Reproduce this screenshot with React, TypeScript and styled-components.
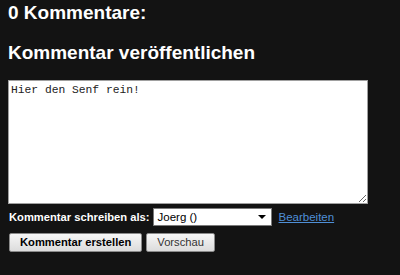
import styled, { createGlobalStyle } from 'styled-components';

const GlobalStyle = createGlobalStyle`
  html, body {
    margin: 0;
    padding: 0;
    background: #131313;
  }
  body {
    font-family: 'Liberation Sans', Arial, sans-serif;
    color: #ffffff;
  }
`;

const Page = styled.div`
  width: 400px;
  height: 275px;
  padding: 3px 8px 0;
  box-sizing: border-box;
  background: #131313;
`;

const Heading = styled.h2`
  margin: 0;
  font-size: 19px;
  line-height: 20px;
  font-weight: bold;
  color: #ffffff;
`;

const SubHeading = styled(Heading)`
  margin-top: 20px;
`;

const CommentBox = styled.textarea`
  display: block;
  margin-top: 17px;
  width: 360px;
  height: 124px;
  box-sizing: border-box;
  padding: 3px 2px;
  border: 1px solid #a0a0a0;
  background: #ffffff;
  color: #222;
  font-family: 'Liberation Mono', 'Courier New', monospace;
  font-size: 11.3px;
  line-height: 13px;
  resize: both;
  outline: none;
`;

const IdentityRow = styled.div`
  display: flex;
  align-items: center;
  margin-top: 4px;
  height: 18px;
`;

const Label = styled.span`
  font-size: 11.2px;
  font-weight: bold;
  color: #ffffff;
  margin-left: 1px;
  margin-right: 3px;
`;

const SelectWrap = styled.div`
  width: 119px;
  height: 18px;
  box-sizing: border-box;
  border: 1px solid #7a7a7a;
  background: #ffffff;
  display: flex;
  align-items: center;
`;

const SelectText = styled.span`
  font-size: 11.5px;
  color: #000;
  padding-left: 4px;
  flex: 1;
`;

const Arrow = styled.span`
  width: 0;
  height: 0;
  border-left: 4px solid transparent;
  border-right: 4px solid transparent;
  border-top: 4px solid #000;
  margin-right: 5px;
`;

const EditLink = styled.a`
  margin-left: 7px;
  font-size: 11.5px;
  color: #4f8fd6;
  text-decoration: underline;
  cursor: pointer;
`;

const ButtonRow = styled.div`
  display: flex;
  gap: 4px;
  margin-top: 7px;
  padding-left: 1px;
`;

const Button = styled.button<{ $primary?: boolean }>`
  height: 19px;
  box-sizing: border-box;
  padding: 0 10px;
  border: 1px solid #8a8a8a;
  border-radius: 2px;
  background: linear-gradient(#f6f6f6, #dcdcdc);
  font-family: 'Liberation Sans', Arial, sans-serif;
  font-size: 11.2px;
  font-weight: ${(p) => (p.$primary ? 'bold' : 'normal')};
  color: ${(p) => (p.$primary ? '#000' : '#333')};
  line-height: 17px;
  cursor: pointer;
`;

export default function App() {
  return (
    <Page>
      <GlobalStyle />
      <Heading>0 Kommentare:</Heading>
      <SubHeading>Kommentar veröffentlichen</SubHeading>
      <CommentBox defaultValue="Hier den Senf rein!" />
      <IdentityRow>
        <Label>Kommentar schreiben als:</Label>
        <SelectWrap>
          <SelectText>Joerg ()</SelectText>
          <Arrow />
        </SelectWrap>
        <EditLink>Bearbeiten</EditLink>
      </IdentityRow>
      <ButtonRow>
        <Button $primary>Kommentar erstellen</Button>
        <Button>Vorschau</Button>
      </ButtonRow>
    </Page>
  );
}
